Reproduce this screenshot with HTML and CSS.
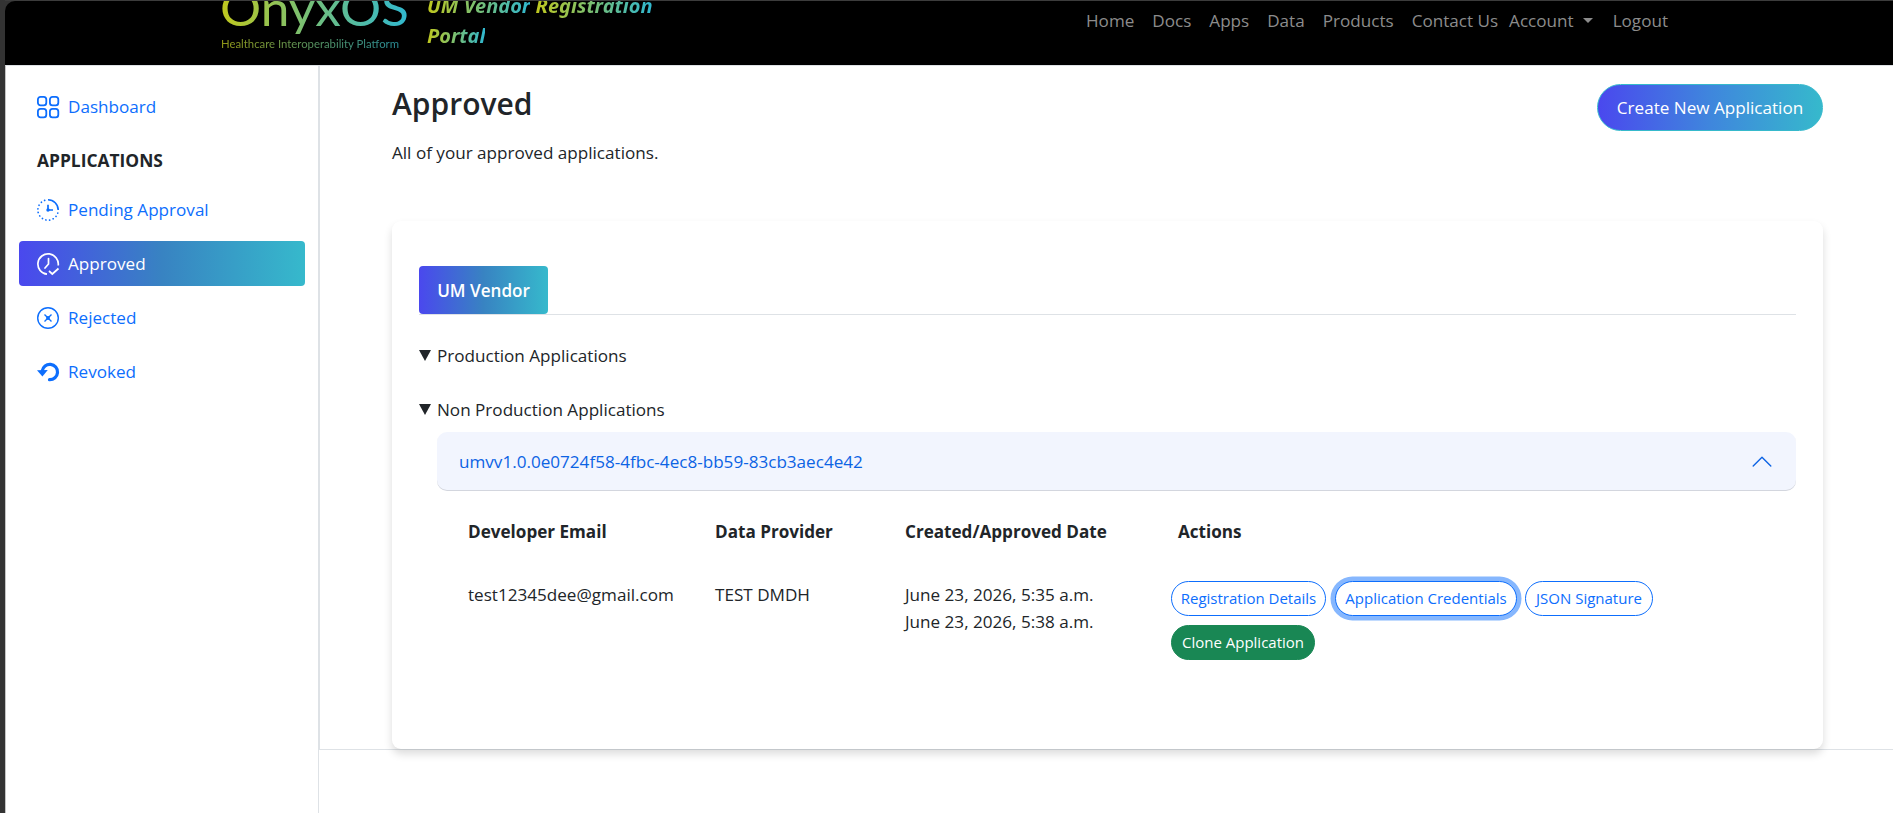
FILE: index.html
```html
<!DOCTYPE html>
<html lang="en">
<head>
  <meta charset="UTF-8" />
  <meta name="viewport" content="width=device-width, initial-scale=1.0"/>
  <title>Approved Applications</title>
  <link rel="stylesheet" href="styles.css">
</head>
<body>
  <div class="page">
    <header class="navbar">
      <a class="brand" href="#">
        <svg class="logo" width="190" height="56" viewBox="0 0 190 56">
          <defs>
            <linearGradient id="brandFill" gradientUnits="userSpaceOnUse" x1="0" y1="0" x2="188" y2="0">
              <stop offset="0" stop-color="#c0c81e"/>
              <stop offset="0.5" stop-color="#70be7e"/>
              <stop offset="1" stop-color="#30b8d0"/>
            </linearGradient>
          </defs>
          <text class="logo-name" x="-1" y="24.5" textLength="189" lengthAdjust="spacingAndGlyphs" fill="url(#brandFill)">OnyxOS</text>
          <text class="logo-tag" x="0" y="47" textLength="178" lengthAdjust="spacingAndGlyphs" fill="url(#brandFill)">Healthcare Interoperability Platform</text>
        </svg>
        <div class="brand-title"><span>UM Vendor</span> <span>Registration</span><br><span>Portal</span></div>
      </a>
      <nav class="nav-links">
        <a href="#">Home</a>
        <a href="#">Docs</a>
        <a href="#">Apps</a>
        <a href="#">Data</a>
        <a href="#">Products</a>
        <a class="contact" href="#">Contact Us</a>
        <a class="account" href="#">Account<i class="caret"></i></a>
        <a href="#">Logout</a>
      </nav>
    </header>

    <div class="layout">
      <aside class="sidebar">
        <a class="side-link" href="#">
          <svg viewBox="0 0 22 22" fill="none" stroke="currentColor" stroke-width="1.8">
            <rect x="0.9" y="0.9" width="8.4" height="8.4" rx="2.6"/><rect x="12.9" y="0.9" width="8.4" height="8.4" rx="2.6"/>
            <rect x="0.9" y="12.9" width="8.4" height="8.4" rx="2.6"/><rect x="12.9" y="12.9" width="8.4" height="8.4" rx="2.6"/>
          </svg>
          <span>Dashboard</span>
        </a>
        <div class="side-heading">APPLICATIONS</div>
        <a class="side-link" href="#">
          <svg viewBox="0 0 22 22" fill="none" stroke="currentColor" stroke-width="1.6">
            <path d="M11 .8A10.2 10.2 0 0 1 21.2 11"/>
            <path d="M20.8 14A10.2 10.2 0 1 1 9 1" stroke-width="1.7" stroke-linecap="round" stroke-dasharray="0.1 3.65"/>
            <path d="M11 5.8V11h5" stroke-width="1.7"/><circle cx="11" cy="11" r="1.7" fill="currentColor" stroke="none"/>
          </svg>
          <span>Pending Approval</span>
        </a>
        <a class="side-link active" href="#">
          <svg viewBox="0 0 22 22" fill="none" stroke="currentColor" stroke-width="1.7">
            <path d="M10 21.2A10.2 10.2 0 1 1 21.2 12.5"/>
            <path d="M11.5 5.5V11L8 15" stroke-linecap="round"/>
            <path d="M12 18l3.3 3L21.5 15.5"/>
          </svg>
          <span>Approved</span>
        </a>
        <a class="side-link" href="#">
          <svg viewBox="0 0 22 22" fill="none" stroke="currentColor" stroke-width="1.4">
            <circle cx="11" cy="11" r="10.3"/>
            <path d="M7.5 7.5l7 7M14.5 7.5l-7 7"/><circle cx="11" cy="11" r="1.9" fill="currentColor" stroke="none"/>
          </svg>
          <span>Rejected</span>
        </a>
        <a class="side-link" href="#">
          <svg viewBox="0 0 22 22" fill="none" stroke="currentColor" stroke-width="3.2">
            <path d="M5.2 10A7.7 7.7 0 1 1 12.5 18.7" stroke-linecap="round"/>
            <path d="M0 9.2l10.8-.2L5.4 15.6z" fill="currentColor" stroke="none"/>
          </svg>
          <span>Revoked</span>
        </a>
      </aside>

      <main class="content">
        <div class="content-head">
          <div>
            <h1>Approved</h1>
            <p>All of your approved applications.</p>
          </div>
          <button class="btn-create">Create New Application</button>
        </div>

        <section class="card">
          <div class="tabs"><button class="tab">UM Vendor</button></div>

          <details open>
            <summary>Production Applications</summary>
          </details>
          <details open>
            <summary>Non Production Applications</summary>
            <div class="accordion">
              <button class="accordion-button">
                <span>umvv1.0.0e0724f58-4fbc-4ec8-bb59-83cb3aec4e42</span>
                <svg width="22" height="22" viewBox="0 0 16 16" fill="none" stroke="#0c63e4" stroke-linecap="round" stroke-linejoin="round"><path d="M1.6 10.9L8 4.5l6.4 6.4"/></svg>
              </button>
              <div class="app-table">
                <div class="app-row head">
                  <div>Developer Email</div>
                  <div>Data Provider</div>
                  <div>Created/Approved Date</div>
                  <div class="actions-title">Actions</div>
                </div>
                <div class="app-row">
                  <div class="email">test12345dee@gmail.com</div>
                  <div class="provider">TEST DMDH</div>
                  <div class="dates">June 23, 2026, 5:35 a.m.<br>June 23, 2026, 5:38 a.m.</div>
                  <div class="actions">
                    <button class="btn">Registration Details</button>
                    <button class="btn focused">Application Credentials</button>
                    <button class="btn json">JSON Signature</button>
                    <button class="btn clone">Clone Application</button>
                  </div>
                </div>
              </div>
            </div>
          </details>
        </section>
      </main>
    </div>
  </div>
</body>
</html>
```
FILE: styles.css
```css
* { box-sizing: border-box; }
body { margin: 0; height: 813px; overflow: hidden; background: #333; color: #212529; font-family: 'Segoe UI', 'Open Sans', 'Noto Sans', sans-serif; font-size: 17.1px; line-height: 27px; }
a { color: #0d6efd; text-decoration: none; }
button { font-family: inherit; font-size: inherit; line-height: 27px; cursor: pointer; white-space: nowrap; }

.page { height: 813px; margin-left: 5px; border-top: 1px solid #3c3c3c; display: flex; flex-direction: column; }

/* header */
.navbar { display: flex; height: 64px; background: #000; border-top-left-radius: 10px; overflow: hidden; flex-shrink: 0; }
.brand { display: flex; margin-left: 216px; width: 865px; }
.logo { display: block; flex-shrink: 0; overflow: hidden; }
.logo-name { font-family: Lato, sans-serif; font-size: 48px; font-weight: 400; }
.logo-tag { font-family: Lato, sans-serif; font-size: 11px; opacity: 0.75; }
.brand-title { margin: -10px 0 0 16px; font-family: 'Noto Sans', sans-serif; font-size: 20px; line-height: 30px; font-weight: 700; font-style: italic; white-space: nowrap; }
.brand-title span { background: linear-gradient(90deg, #c0c81e, #70be7e 55%, #30b8d0); -webkit-background-clip: text; background-clip: text; color: transparent; }
.nav-links { display: flex; gap: 18px; padding-top: 6px; }
.nav-links a { color: #8c8c8c; white-space: nowrap; }
.nav-links .contact { margin-right: -7px; }
.nav-links .account { margin-right: 2px; }
.caret { display: inline-block; margin-left: 9px; vertical-align: 4px; border: 5px solid transparent; border-top-color: #8c8c8c; border-bottom: 0; }

.layout { display: flex; flex: 1; background: #fff; border-top: 1px solid #dee2e6; border-left: 1px solid #c4c4c4; }

/* sidebar */
.sidebar { width: 313px; padding: 18px 13px; border-right: 1px solid #dee2e6; flex-shrink: 0; }
.side-link { display: flex; align-items: center; height: 45px; margin-bottom: 9px; padding-left: 18px; border-radius: 4px; }
.side-link svg { width: 22px; height: 22px; margin-right: 9px; overflow: visible; }
.side-link.active { color: #fff; background: linear-gradient(90deg, #4a48ee, #3883c2 50%, #36b9cc); }
.side-heading { height: 45px; line-height: 45px; margin: 0 0 4px 18px; font-size: 17.4px; font-weight: 700; }

/* content */
.content { flex: 1; height: 684px; padding: 18px 70px 0 72px; border-left: 1px solid #dee2e6; border-bottom: 1px solid #dee2e6; }
.content-head { display: flex; justify-content: space-between; align-items: flex-start; height: 137px; }
h1 { margin: 1px 0 0; font-size: 30px; line-height: 38px; font-weight: 600; }
p { margin: 16px 0 0; }
.btn-create { width: 226px; height: 47px; padding: 0; border: 1px solid #36b9cc; border-radius: 24px; background: linear-gradient(90deg, #4a48ee, #3f86dd 50%, #36b9cc); color: #fff; }
.card { height: 528px; padding: 45px 27px 0; border-radius: 9px; background: #fff; box-shadow: 0 5px 9px rgba(0,0,0,0.14); }
.tabs { height: 49px; border-bottom: 1px solid #dee2e6; margin-bottom: 27px; }
.tab { width: 129px; height: 48px; padding: 0; border: 0; border-radius: 4px; background: linear-gradient(90deg, #4a48ee, #3883c2 50%, #36b9cc); color: #fff; font-weight: 600; }
details { margin-bottom: 27px; }
summary { display: flex; align-items: center; cursor: pointer; }
summary::before { content: ""; margin-right: 6px; border: 6px solid transparent; border-top: 11px solid #212529; border-bottom: 0; }

.accordion { margin: 9px 0 0 18px; }
.accordion-button { display: flex; justify-content: space-between; align-items: center; width: 100%; height: 59px; padding: 0 23px 0 22px; border: 0; border-radius: 10px; background: #f2f5fe; color: #0c63e4; box-shadow: inset 0 -1px 0 rgba(0,0,0,0.125); }
.app-table { padding: 0 31px; }
.app-row { display: grid; grid-template-columns: 247px 190px 266px 1fr; }
.app-row.head { height: 90px; padding-top: 27px; font-weight: 700; }
.actions-title { padding-left: 7px; }
.actions { display: flex; flex-wrap: wrap; gap: 9px; }
.btn { height: 35px; padding: 0; border: 1px solid #0d6efd; border-radius: 18px; background: #fff; color: #0d6efd; font-size: 15px; width: 155px; }
.btn.focused { width: 182px; box-shadow: 0 0 0 4.5px #86b7fe; }
.btn.json { width: 128px; margin-left: -1px; }
.btn.clone { width: 144px; background: #198754; border-color: #198754; color: #fff; }
```
